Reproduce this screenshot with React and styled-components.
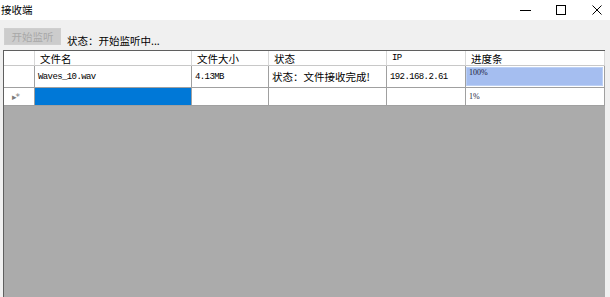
import React from "react"
import styled, { createGlobalStyle, css } from "styled-components"

const Global = createGlobalStyle`
  html, body {
    margin: 0;
    padding: 0;
    width: 610px;
    height: 297px;
    overflow: hidden;
    background: #f0f0f0;
  }
  #root {
    height: 297px;
  }
`

const Window = styled.div`
  display: flex;
  flex-direction: column;
  width: 610px;
  height: 297px;
  font-family: "Noto Sans CJK SC", "Liberation Sans", sans-serif;
  color: #000;
`

const TitleBar = styled.div`
  display: flex;
  align-items: center;
  height: 20px;
  background: #fff;
  flex-shrink: 0;
`

const Title = styled.span`
  flex: 1;
  padding-left: 1px;
  font-size: 10.5px;
  line-height: 16px;
`

const Controls = styled.div`
  display: flex;
  align-items: center;
  gap: 10px;
  height: 100%;
`

const CtrlBtn = styled.div`
  display: flex;
  align-items: center;
  justify-content: center;
  width: 26px;
  height: 100%;
  svg {
    display: block;
  }
`

const Body = styled.div`
  flex: 1;
  display: flex;
  background: #f0f0f0;
  min-height: 0;
`

const Main = styled.div`
  flex: 1;
  display: flex;
  flex-direction: column;
  min-width: 0;
`

const Toolbar = styled.div`
  display: flex;
  align-items: flex-end;
  height: 30px;
  padding: 0 0 5px 4px;
  box-sizing: border-box;
  flex-shrink: 0;
`

const Button = styled.button`
  width: 57px;
  height: 17px;
  margin: 0;
  padding: 0;
  border: 1px solid #cfcfcf;
  background: #cccccc;
  color: #a8a8a8;
  font-family: inherit;
  font-size: 10.5px;
  line-height: 15px;
`

const Status = styled.span`
  margin-left: 6px;
  font-size: 10.5px;
  line-height: 14px;
  margin-bottom: -3px;
`

const Grid = styled.div`
  flex: 1;
  margin-left: 3px;
  width: 602px;
  border-top: 1px solid #5f5f5f;
  border-left: 1px solid #5f5f5f;
  box-sizing: border-box;
  background: #ababab;
`

const Row = styled.div`
  display: grid;
  grid-template-columns: 31px 157px 77px 118px 79px 139px;
  height: ${p => p.h}px;
  background: #fff;
`

const Cell = styled.div`
  position: relative;
  display: flex;
  align-items: center;
  box-sizing: border-box;
  border-right: 1px solid ${p => (p.head ? "#d8d8d8" : "#a0a0a0")};
  border-bottom: 1px solid #a0a0a0;
  padding-left: 3px;
  font-size: 10.5px;
  white-space: nowrap;
  overflow: hidden;
  ${p =>
    p.head &&
    css`
      padding-left: 5px;
      border-bottom-color: #c8c8c8;
    `}
  ${p =>
    p.selected &&
    css`
      background: #0078d7;
    `}
  ${p =>
    p.mono &&
    css`
      font-family: "Liberation Mono", monospace;
      font-size: 9px;
      letter-spacing: -0.6px;
    `}
`

const RowMark = styled.span`
  font-family: "DejaVu Sans", sans-serif;
  font-size: 9px;
  color: #7a7a7a;
  margin-left: 5px;
  letter-spacing: -1px;
`

const Progress = styled.div`
  position: absolute;
  inset: 1px 1px 1px 0;
  background: ${p => (p.value >= 100 ? "#a5bef0" : "transparent")};
  border: 1px solid ${p => (p.value >= 100 ? "#bcd0f5" : "transparent")};
  box-sizing: border-box;
`

const ProgressText = styled.span`
  position: absolute;
  left: 3px;
  top: ${p => p.top}px;
  font-family: "Liberation Serif", serif;
  font-size: 8px;
  line-height: 8px;
  color: #1a1a3a;
`

const Edge = styled.div`
  width: 5px;
  background: #f0f0f0;
`

const rows = [
  { name: "Waves_10.wav", size: "4.13MB", state: "状态：文件接收完成!", ip: "192.168.2.61", progress: 100 },
]

export default function App() {
  return (
    <>
      <Global />
      <Window>
        <TitleBar>
          <Title>接收端</Title>
          <Controls>
            <CtrlBtn>
              <svg width="11" height="11" viewBox="0 0 11 11">
                <path d="M0 5.5h11" stroke="#000" strokeWidth="1" />
              </svg>
            </CtrlBtn>
            <CtrlBtn>
              <svg width="10" height="10" viewBox="0 0 10 10">
                <rect x="0.5" y="0.5" width="9" height="9" fill="none" stroke="#000" strokeWidth="1" />
              </svg>
            </CtrlBtn>
            <CtrlBtn>
              <svg width="10" height="10" viewBox="0 0 10 10">
                <path d="M0.5 0.5L9.5 9.5M9.5 0.5L0.5 9.5" stroke="#000" strokeWidth="1" />
              </svg>
            </CtrlBtn>
          </Controls>
        </TitleBar>
        <Body>
          <Main>
            <Toolbar>
              <Button disabled>开始监听</Button>
              <Status>状态：开始监听中...</Status>
            </Toolbar>
            <Grid>
              <Row h={15}>
                <Cell head />
                <Cell head>文件名</Cell>
                <Cell head>文件大小</Cell>
                <Cell head>状态</Cell>
                <Cell head mono>IP</Cell>
                <Cell head>进度条</Cell>
              </Row>
              {rows.map((r, i) => (
                <Row h={22} key={i}>
                  <Cell />
                  <Cell mono>{r.name}</Cell>
                  <Cell mono>{r.size}</Cell>
                  <Cell>{r.state}</Cell>
                  <Cell mono>{r.ip}</Cell>
                  <Cell>
                    <Progress value={r.progress} />
                    <ProgressText top={3}>{r.progress}%</ProgressText>
                  </Cell>
                </Row>
              ))}
              <Row h={18}>
                <Cell>
                  <RowMark>▸*</RowMark>
                </Cell>
                <Cell selected />
                <Cell />
                <Cell />
                <Cell />
                <Cell>
                  <Progress value={1} />
                  <ProgressText top={5}>1%</ProgressText>
                </Cell>
              </Row>
            </Grid>
          </Main>
          <Edge />
        </Body>
      </Window>
    </>
  )
}
